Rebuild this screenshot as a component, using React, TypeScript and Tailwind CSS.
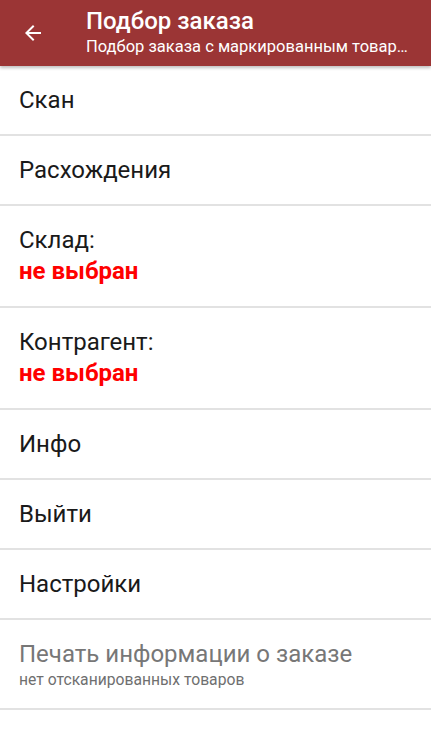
import React from "react";

const font = { fontFamily: "Roboto, 'Noto Sans', sans-serif" };

function Divider() {
  return <div className="h-[2px] bg-[#e2e2e2]" />;
}

function SimpleRow({ label }: { label: string }) {
  return (
    <div className="h-[68px] flex items-center px-[19px] text-[24px] text-[#1a1a1a]">
      {label}
    </div>
  );
}

function ValueRow({ label, value }: { label: string; value: string }) {
  return (
    <div className="h-[100px] flex flex-col justify-center px-[19px] text-[24px] leading-[31px]">
      <span className="text-[#1a1a1a]">{label}</span>
      <span className="text-[#ff0000] font-bold">{value}</span>
    </div>
  );
}

export default function App() {
  return (
    <div className="w-[431px] h-[738px] bg-white overflow-hidden" style={font}>
      <header className="relative z-10 h-[66px] bg-[#9b3535] flex items-center shadow-[0_2px_3px_rgba(0,0,0,0.25)]">
        <div className="w-[86px] shrink-0 flex justify-start pl-[21px]">
          <svg width="24" height="24" viewBox="0 0 24 24" fill="white">
            <path d="M20 11H7.83l5.59-5.59L12 4l-8 8 8 8 1.41-1.41L7.83 13H20v-2z" />
          </svg>
        </div>
        <div className="flex flex-col text-white min-w-0 pr-[16px] -mt-[2px]">
          <span className="text-[24px] font-medium leading-[29px]">Подбор заказа</span>
          <span className="text-[16.5px] leading-[22px] whitespace-nowrap overflow-hidden text-ellipsis">
            Подбор заказа с маркированным товаром
          </span>
        </div>
      </header>
      <SimpleRow label="Скан" />
      <Divider />
      <SimpleRow label="Расхождения" />
      <Divider />
      <ValueRow label="Склад:" value="не выбран" />
      <Divider />
      <ValueRow label="Контрагент:" value="не выбран" />
      <Divider />
      <SimpleRow label="Инфо" />
      <Divider />
      <SimpleRow label="Выйти" />
      <Divider />
      <SimpleRow label="Настройки" />
      <Divider />
      <div className="h-[88px] flex flex-col justify-center px-[19px]">
        <span className="text-[24px] leading-[32px] text-[#777777]">Печать информации о заказе</span>
        <span className="text-[15.7px] leading-[20px] text-[#6f6f6f]">нет отсканированных товаров</span>
      </div>
      <Divider />
    </div>
  );
}
